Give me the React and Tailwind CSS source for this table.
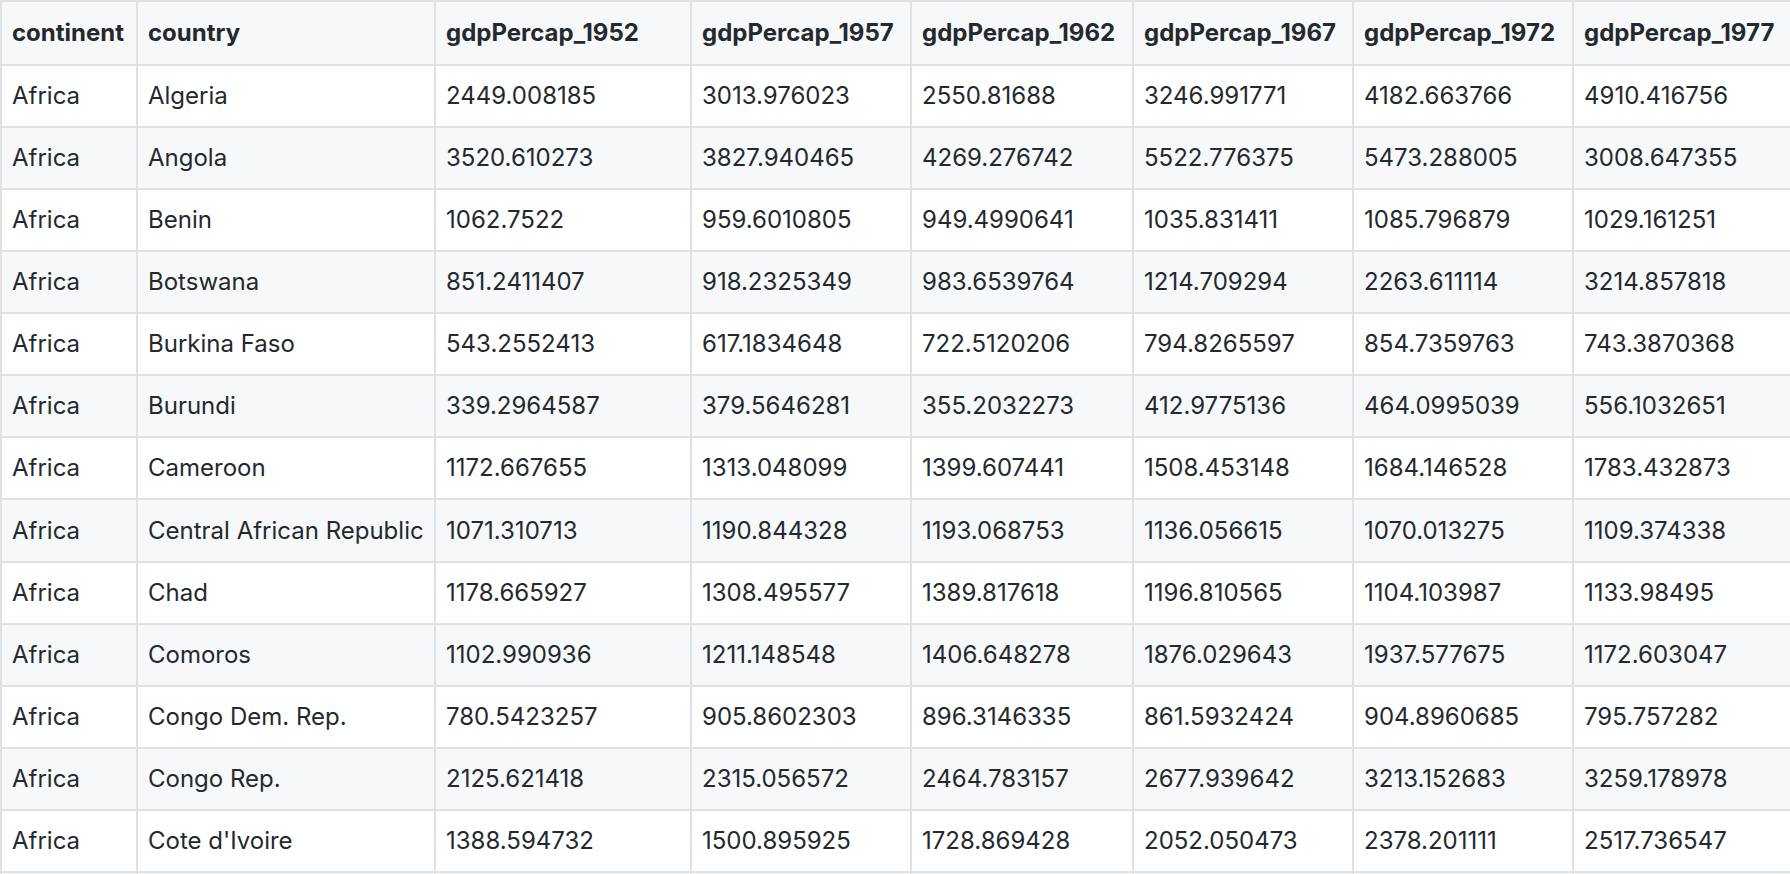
import React from "react";

const Columns = [
  { key: "continent", width: "w-[136px]" },
  { key: "country", width: "w-[298px]" },
  { key: "gdpPercap_1952", width: "w-[256px]" },
  { key: "gdpPercap_1957", width: "w-[220px]" },
  { key: "gdpPercap_1962", width: "w-[222px]" },
  { key: "gdpPercap_1967", width: "w-[220px]" },
  { key: "gdpPercap_1972", width: "w-[220px]" },
  { key: "gdpPercap_1977", width: "w-[240px]" },
];

const Rows = [
  ["Africa", "Algeria", "2449.008185", "3013.976023", "2550.81688", "3246.991771", "4182.663766", "4910.416756"],
  ["Africa", "Angola", "3520.610273", "3827.940465", "4269.276742", "5522.776375", "5473.288005", "3008.647355"],
  ["Africa", "Benin", "1062.7522", "959.6010805", "949.4990641", "1035.831411", "1085.796879", "1029.161251"],
  ["Africa", "Botswana", "851.2411407", "918.2325349", "983.6539764", "1214.709294", "2263.611114", "3214.857818"],
  ["Africa", "Burkina Faso", "543.2552413", "617.1834648", "722.5120206", "794.8265597", "854.7359763", "743.3870368"],
  ["Africa", "Burundi", "339.2964587", "379.5646281", "355.2032273", "412.9775136", "464.0995039", "556.1032651"],
  ["Africa", "Cameroon", "1172.667655", "1313.048099", "1399.607441", "1508.453148", "1684.146528", "1783.432873"],
  ["Africa", "Central African Republic", "1071.310713", "1190.844328", "1193.068753", "1136.056615", "1070.013275", "1109.374338"],
  ["Africa", "Chad", "1178.665927", "1308.495577", "1389.817618", "1196.810565", "1104.103987", "1133.98495"],
  ["Africa", "Comoros", "1102.990936", "1211.148548", "1406.648278", "1876.029643", "1937.577675", "1172.603047"],
  ["Africa", "Congo Dem. Rep.", "780.5423257", "905.8602303", "896.3146335", "861.5932424", "904.8960685", "795.757282"],
  ["Africa", "Congo Rep.", "2125.621418", "2315.056572", "2464.783157", "2677.939642", "3213.152683", "3259.178978"],
  ["Africa", "Cote d'Ivoire", "1388.594732", "1500.895925", "1728.869428", "2052.050473", "2378.201111", "2517.736547"],
];

const App = () => {
  return (
    <div
      className="w-[1790px] h-[874px] overflow-hidden bg-white text-[#24292e] text-[24px]"
      style={{ fontFamily: "Inter, 'Noto Sans', sans-serif" }}
    >
      <div className="flex flex-col w-max border-t-2 border-l-2 border-[#dfe2e5]">
        {/* header */}
        <div className="flex bg-[#f6f8fa] font-bold">
          {Columns.map((col) => (
            <div
              key={col.key}
              className={`${col.width} shrink-0 h-[63.5px] flex items-center pl-[10px] border-r-2 border-b-2 border-[#dfe2e5] whitespace-nowrap`}
            >
              {col.key}
            </div>
          ))}
        </div>
        {/* rows */}
        {Rows.map((row, i) => (
          <div
            key={i}
            className={`flex ${i % 2 === 1 ? "bg-[#f6f8fa]" : "bg-white"}`}
          >
            {row.map((cell, j) => (
              <div
                key={j}
                className={`${Columns[j].width} shrink-0 h-[62.15px] flex items-center pl-[10px] border-r-2 border-b-2 border-[#dfe2e5] whitespace-nowrap`}
              >
                {cell}
              </div>
            ))}
          </div>
        ))}
        {/* start of next row, cut off by the viewport */}
        <div className="flex bg-[#f6f8fa]">
          {Columns.map((col) => (
            <div
              key={col.key}
              className={`${col.width} shrink-0 h-[62px] border-r-2 border-[#dfe2e5]`}
            />
          ))}
        </div>
      </div>
    </div>
  );
};

export default App;
